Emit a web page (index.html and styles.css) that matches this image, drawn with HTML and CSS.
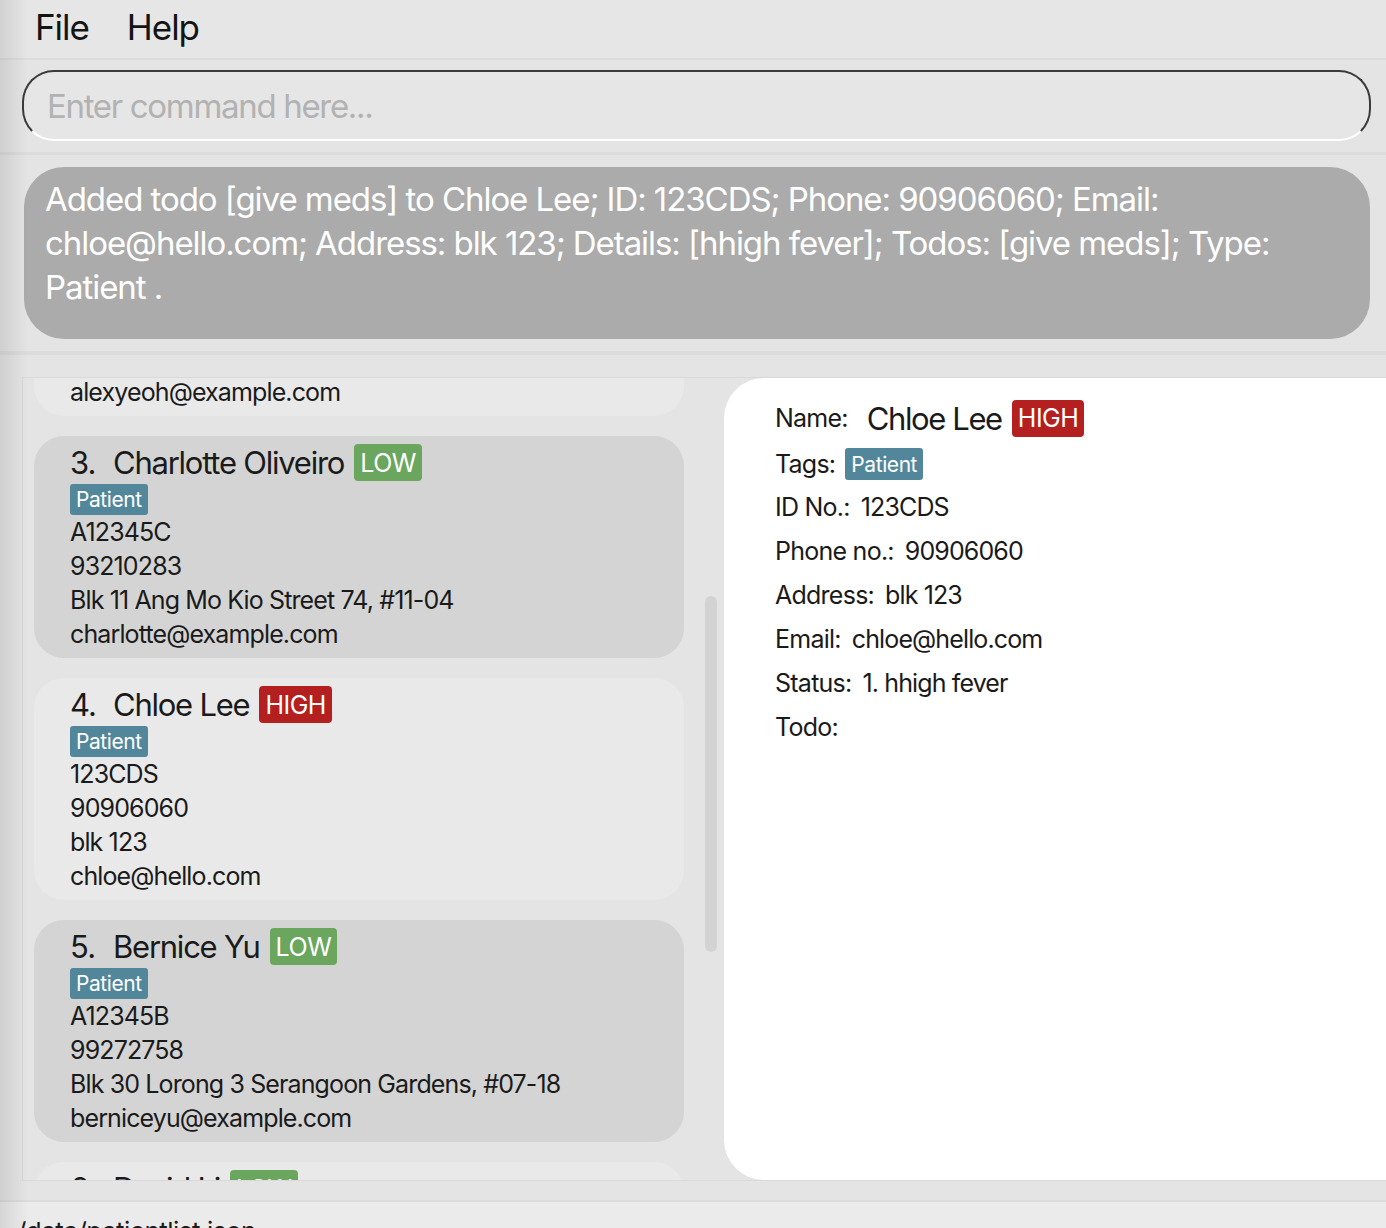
FILE: index.html
```html
<!DOCTYPE html>
<html lang="en">
<head>
<meta charset="utf-8">
<title>Patient list</title>
<link rel="stylesheet" href="styles.css">
</head>
<body>
<div class="app">
  <nav class="menubar">
    <span class="menu-item">File</span>
    <span class="menu-item">Help</span>
  </nav>

  <section class="command">
    <div class="command-box"><span class="placeholder">Enter command here...</span></div>
  </section>

  <section class="result">
    <div class="result-box">Added todo [give meds] to Chloe Lee; ID: 123CDS; Phone: 90906060; Email: chloe@hello.com; Address: blk 123; Details: [hhigh fever]; Todos: [give meds]; Type: Patient .</div>
  </section>

  <main class="main">
    <div class="split">
      <div class="list-panel">
        <div class="list-viewport">
          <div class="list">
            <div class="card card-even">
              <div class="card-title"><span class="idx">2.</span><span class="name">Alex Yeoh</span><span class="badge low">LOW</span></div>
              <div class="tags"><span class="tag">Patient</span></div>
              <div class="line">A12345A</div>
              <div class="line">87438807</div>
              <div class="line">Blk 30 Geylang Street 29, #06-40</div>
              <div class="line">alexyeoh@example.com</div>
            </div>
            <div class="card card-odd">
              <div class="card-title"><span class="idx">3.</span><span class="name">Charlotte Oliveiro</span><span class="badge low">LOW</span></div>
              <div class="tags"><span class="tag">Patient</span></div>
              <div class="line">A12345C</div>
              <div class="line">93210283</div>
              <div class="line">Blk 11 Ang Mo Kio Street 74, #11-04</div>
              <div class="line">charlotte@example.com</div>
            </div>
            <div class="card card-even">
              <div class="card-title"><span class="idx">4.</span><span class="name">Chloe Lee</span><span class="badge high">HIGH</span></div>
              <div class="tags"><span class="tag">Patient</span></div>
              <div class="line">123CDS</div>
              <div class="line">90906060</div>
              <div class="line">blk 123</div>
              <div class="line">chloe@hello.com</div>
            </div>
            <div class="card card-odd">
              <div class="card-title"><span class="idx">5.</span><span class="name">Bernice Yu</span><span class="badge low">LOW</span></div>
              <div class="tags"><span class="tag">Patient</span></div>
              <div class="line">A12345B</div>
              <div class="line">99272758</div>
              <div class="line">Blk 30 Lorong 3 Serangoon Gardens, #07-18</div>
              <div class="line">berniceyu@example.com</div>
            </div>
            <div class="card card-even">
              <div class="card-title"><span class="idx">6.</span><span class="name">David Li</span><span class="badge low">LOW</span></div>
              <div class="tags"><span class="tag">Patient</span></div>
              <div class="line">A12345D</div>
              <div class="line">91031282</div>
              <div class="line">Blk 436 Serangoon Gardens Street 26, #16-43</div>
              <div class="line">lidavid@example.com</div>
            </div>
          </div>
        </div>
        <div class="scroll-track"><div class="scroll-thumb"></div></div>
      </div>

      <div class="detail">
        <div class="d-row d-name">
          <span class="d-label">Name:</span>
          <span class="d-name-value">Chloe Lee</span>
          <span class="badge high">HIGH</span>
        </div>
        <div class="d-row d-tags">
          <span class="d-label">Tags:</span>
          <span class="tag">Patient</span>
        </div>
        <div class="d-row d-line d-first"><span class="d-label">ID No.:</span><span class="d-value">123CDS</span></div>
        <div class="d-row d-line"><span class="d-label">Phone no.:</span><span class="d-value">90906060</span></div>
        <div class="d-row d-line"><span class="d-label">Address:</span><span class="d-value">blk 123</span></div>
        <div class="d-row d-line"><span class="d-label">Email:</span><span class="d-value">chloe@hello.com</span></div>
        <div class="d-row d-line"><span class="d-label">Status:</span><span class="d-value">1. hhigh fever</span></div>
        <div class="d-row d-line"><span class="d-label">Todo:</span></div>
      </div>
    </div>
  </main>

  <footer class="status">./data/patientlist.json</footer>
</div>
</body>
</html>
```

FILE: styles.css
```css
* { box-sizing: border-box; }

html, body {
  margin: 0;
  padding: 0;
  height: 100%;
  overflow: hidden;
}

body {
  font-family: "Inter", "Liberation Sans", sans-serif;
  background: #e4e4e4;
  color: #1a1a1a;
  position: relative;
}

/* window-edge shadow on the left */
body::before {
  content: "";
  position: absolute;
  left: 0;
  top: 0;
  bottom: 0;
  width: 28px;
  background: linear-gradient(to right, rgba(0,0,0,0.09), rgba(0,0,0,0));
  pointer-events: none;
  z-index: 5;
}

.app {
  display: flex;
  flex-direction: column;
  height: 100%;
}

/* menu bar */
.menubar {
  height: 60px;
  display: flex;
  align-items: center;
  gap: 38px;
  padding: 0 0 5px 35px;
  background: #e6e6e6;
  border-bottom: 2px solid #dcdcdc;
}
.menu-item {
  font-size: 35px;
  letter-spacing: -0.03em;
  color: #141414;
}

/* command box */
.command {
  padding: 10px 15px 11px 22px;
  border-bottom: 3px solid #dcdcdc;
}
.command-box {
  height: 71px;
  border-radius: 32px;
  border: 2px solid #3a3a3a;
  border-bottom-color: #ffffff;
  background: #e6e6e6;
  display: flex;
  align-items: center;
  padding-left: 23px;
  padding-bottom: 0;
}
.placeholder {
  font-size: 33px;
  letter-spacing: -0.04em;
  color: #b2b2b2;
}

/* result display */
.result {
  padding: 12px 16px 12px 24px;
  border-bottom: 4px solid #dcdcdc;
}
.result-box {
  background: #ababab;
  border-radius: 40px;
  height: 172px;
  padding: 10px 40px 0 21px;
  color: #ffffff;
  font-size: 33px;
  line-height: 44px;
  letter-spacing: -0.032em;
}

/* main split */
.main {
  flex: 1;
  padding: 22px 0 19px 22px;
  border-bottom: 2px solid #dcdcdc;
  display: flex;
  flex-direction: column;
  min-height: 0;
}
.split {
  flex: 1;
  display: flex;
  border: 1px solid #d9d9d9;
  border-right: none;
  min-height: 0;
}

.list-panel {
  width: 701px;
  flex: none;
  display: flex;
  position: relative;
}
.list-viewport {
  flex: 1;
  overflow: hidden;
  padding: 0 40px 0 11px;
}
.list {
  display: flex;
  flex-direction: column;
  gap: 20px;
  margin-top: -184px;
}
.card {
  height: 222px;
  border-radius: 30px;
  padding: 8px 20px 7px 36px;
  font-size: 25px;
  letter-spacing: -0.035em;
  color: #1a1a1a;
}
.card-odd { background: #d4d4d4; }
.card-even { background: #e9e9e9; }

.card-title {
  height: 40px;
  display: flex;
  align-items: flex-start;
}
.idx {
  font-size: 31px;
  line-height: 37px;
  width: 43px;
}
.name {
  font-size: 31px;
  line-height: 37px;
  letter-spacing: -0.04em;
  margin-right: 10px;
}
.badge {
  display: inline-flex;
  align-items: center;
  height: 37px;
  padding: 0 6px;
  border-radius: 4px;
  color: #ffffff;
  font-size: 25px;
  letter-spacing: -0.02em;
}
.badge.low { background: #6aa65d; }
.badge.high { background: #b41f1f; }

.tags {
  height: 31px;
  display: flex;
  align-items: flex-start;
}
.tag {
  display: inline-flex;
  align-items: center;
  height: 31px;
  padding: 0 6px;
  border-radius: 3px;
  background: #52879b;
  color: #ffffff;
  font-size: 21px;
  letter-spacing: -0.02em;
}
.line {
  height: 34px;
  line-height: 34px;
  white-space: nowrap;
}

.scroll-track {
  position: absolute;
  right: 7px;
  top: 218px;
  width: 12px;
  height: 356px;
}
.scroll-thumb {
  width: 100%;
  height: 100%;
  border-radius: 6px;
  background: #d3d3d3;
}

/* detail */
.detail {
  flex: 1;
  background: #ffffff;
  border-radius: 40px 0 0 40px;
  padding: 21px 0 0 51px;
  display: flex;
  flex-direction: column;
  font-size: 25px;
  letter-spacing: -0.03em;
  color: #1a1a1a;
}
.d-row {
  display: flex;
  align-items: center;
}
.d-name { height: 38px; }
.d-name .d-label { margin-right: 19px; }
.d-name-value {
  font-size: 31px;
  letter-spacing: -0.045em;
  margin-right: 10px;
}
.d-tags {
  height: 32px;
  margin-top: 11px;
  gap: 10px;
}
.d-tags .tag { height: 32px; }
.d-line {
  height: 44px;
  gap: 11px;
}
.d-first { margin-top: 5px; }
.d-value {
  font-size: 25px;
  letter-spacing: -0.035em;
}

/* status bar */
.status {
  height: 26px;
  flex: none;
  background: #ebebeb;
  padding: 14px 0 0 10px;
  font-size: 26px;
  letter-spacing: -0.02em;
  white-space: nowrap;
  overflow: hidden;
}
```
